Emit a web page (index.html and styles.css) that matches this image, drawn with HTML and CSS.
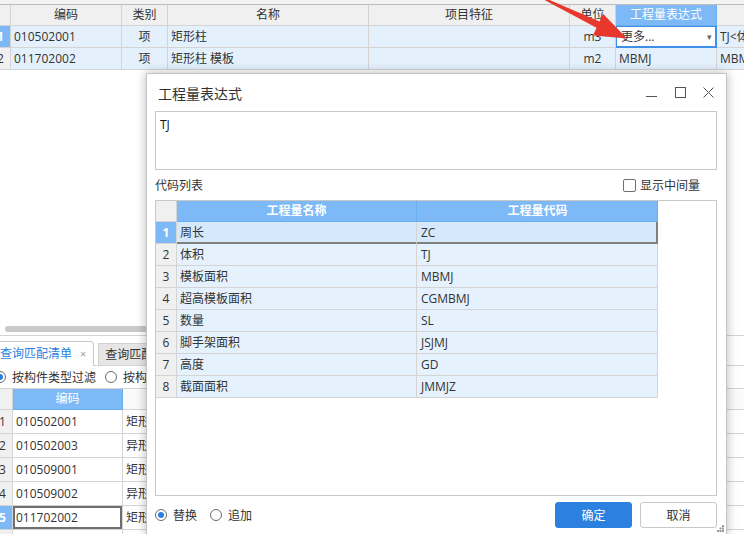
FILE: index.html
```html
<!DOCTYPE html>
<html lang="zh-CN">
<head>
<meta charset="utf-8">
<title>工程量表达式</title>
<link rel="stylesheet" href="styles.css">
</head>
<body>
<div class="app">
  <div class="topstrip"></div>
  <div class="tgrid">
    <div class="trow head">
      <div class="cell rn"></div>
      <div class="cell ctr">编码</div>
      <div class="cell ctr">类别</div>
      <div class="cell ctr">名称</div>
      <div class="cell ctr">项目特征</div>
      <div class="cell ctr">单位</div>
      <div class="cell ctr hl">工程量表达式</div>
      <div class="cell"></div>
    </div>
    <div class="trow">
      <div class="cell rn sel">1</div>
      <div class="cell">010502001</div>
      <div class="cell ctr">项</div>
      <div class="cell">矩形柱</div>
      <div class="cell"></div>
      <div class="cell ctr">m3</div>
      <div class="cell editor"><span>更多...</span><span class="caret">▾</span></div>
      <div class="cell">TJ&lt;体积&gt;</div>
    </div>
    <div class="trow">
      <div class="cell rn">2</div>
      <div class="cell">011702002</div>
      <div class="cell ctr">项</div>
      <div class="cell">矩形柱 模板</div>
      <div class="cell"></div>
      <div class="cell ctr">m2</div>
      <div class="cell">MBMJ</div>
      <div class="cell">MBMJ</div>
    </div>
  </div>

  <div class="blank"></div>
  <div class="hscroll"><div class="thumb"></div></div>

  <div class="tabbar">
    <div class="tab active"><span>查询匹配清单</span><span class="x">×</span></div>
    <div class="tab">查询匹配定额</div>
  </div>

  <div class="filter">
    <span class="radio on"></span><span class="flabel">按构件类型过滤</span>
    <span class="radio"></span><span class="flabel">按构件属性过滤</span>
  </div>

  <div class="lgrid">
    <div class="lrow head">
      <div class="cell rn"></div>
      <div class="cell ctr hl">编码</div>
      <div class="cell ctr">名称</div>
      <div class="cell ctr">项目特征</div>
      <div class="cell ctr">单位</div>
    </div>
    <div class="lrow"><div class="cell rn">1</div><div class="cell">010502001</div><div class="cell">矩形柱</div><div class="cell"></div><div class="cell"></div></div>
    <div class="lrow"><div class="cell rn">2</div><div class="cell">010502003</div><div class="cell">异形柱</div><div class="cell"></div><div class="cell"></div></div>
    <div class="lrow"><div class="cell rn">3</div><div class="cell">010509001</div><div class="cell">矩形柱</div><div class="cell"></div><div class="cell"></div></div>
    <div class="lrow"><div class="cell rn">4</div><div class="cell">010509002</div><div class="cell">异形柱</div><div class="cell"></div><div class="cell"></div></div>
    <div class="lrow"><div class="cell rn sel">5</div><div class="cell focus">011702002</div><div class="cell">矩形柱</div><div class="cell"></div><div class="cell"></div></div>
    <div class="lrow"><div class="cell rn">6</div><div class="cell">011702003</div><div class="cell">异形柱</div><div class="cell"></div><div class="cell"></div></div>
  </div>
</div>

<svg class="arrow" width="744" height="60" viewBox="0 0 744 60" aria-hidden="true">
  <polygon points="539.7,-2.6 596.5,27.8 593.0,35.5 627,38.5 603.0,13.7 599.5,21.4 540.3,-4.0" fill="#e8382d"/>
</svg>

<div class="dialog">
  <div class="titlebar">
    <span class="title">工程量表达式</span>
    <span class="wctl">
      <svg class="ic min" width="11" height="11" viewBox="0 0 11 11"><line x1="0" y1="9.5" x2="11" y2="9.5" stroke="#555" stroke-width="1"/></svg>
      <svg class="ic max" width="11" height="11" viewBox="0 0 11 11"><rect x="0.5" y="0.5" width="10" height="10" fill="none" stroke="#555" stroke-width="1"/></svg>
      <svg class="ic cls" width="11" height="11" viewBox="0 0 11 11"><path d="M0.5 0.5 L10.5 10.5 M10.5 0.5 L0.5 10.5" stroke="#555" stroke-width="1"/></svg>
    </span>
  </div>
  <div class="expr">TJ</div>
  <div class="labelrow">
    <span>代码列表</span>
    <span class="chk"><span class="box"></span><span>显示中间量</span></span>
  </div>
  <div class="frame">
    <div class="drow head">
      <div class="cell rn"></div>
      <div class="cell ctr hl">工程量名称</div>
      <div class="cell ctr hl">工程量代码</div>
    </div>
    <div class="drow cur"><div class="cell rn sel">1</div><div class="cell">周长</div><div class="cell">ZC</div></div>
    <div class="drow"><div class="cell rn">2</div><div class="cell">体积</div><div class="cell">TJ</div></div>
    <div class="drow"><div class="cell rn">3</div><div class="cell">模板面积</div><div class="cell">MBMJ</div></div>
    <div class="drow"><div class="cell rn">4</div><div class="cell">超高模板面积</div><div class="cell">CGMBMJ</div></div>
    <div class="drow"><div class="cell rn">5</div><div class="cell">数量</div><div class="cell">SL</div></div>
    <div class="drow"><div class="cell rn">6</div><div class="cell">脚手架面积</div><div class="cell">JSJMJ</div></div>
    <div class="drow"><div class="cell rn">7</div><div class="cell">高度</div><div class="cell">GD</div></div>
    <div class="drow"><div class="cell rn">8</div><div class="cell">截面面积</div><div class="cell">JMMJZ</div></div>
  </div>
  <div class="footer">
    <span class="radio on"></span><span class="rlabel">替换</span>
    <span class="radio"></span><span class="rlabel">追加</span>
    <span class="btns">
      <button class="btn primary">确定</button>
      <button class="btn">取消</button>
    </span>
  </div>
  <svg class="grip" width="7" height="7" viewBox="0 0 7 7" aria-hidden="true">
    <rect x="5" y="0" width="2" height="2" fill="#9a9a9a"/>
    <rect x="2.5" y="2.5" width="2" height="2" fill="#9a9a9a"/>
    <rect x="5" y="2.5" width="2" height="2" fill="#9a9a9a"/>
    <rect x="0" y="5" width="2" height="2" fill="#9a9a9a"/>
    <rect x="2.5" y="5" width="2" height="2" fill="#9a9a9a"/>
    <rect x="5" y="5" width="2" height="2" fill="#9a9a9a"/>
  </svg>
</div>
</body>
</html>
```

FILE: styles.css
```css
* { box-sizing: border-box; margin: 0; padding: 0; }
html, body { width: 744px; height: 534px; overflow: hidden; background: #fff; }
body {
  position: relative;
  font-family: "Open Sans", "Noto Sans CJK SC", sans-serif;
  font-size: 12px;
  color: #333;
}

.app { display: flex; flex-direction: column; width: 744px; height: 534px; overflow: hidden; }

.topstrip { flex: none; height: 5px; background: #f3f3f3; border-bottom: 1px solid #bcbcbc; }

.cell {
  border-right: 1px solid #d4d4d4;
  border-bottom: 1px solid #d4d4d4;
  padding: 0 3px;
  white-space: nowrap;
  overflow: hidden;
}
.ctr { text-align: center; }
.rn { background: #f0f0f0; text-align: center; padding: 0; }
.rn.sel { background: #7db9f6; color: #fff; font-weight: bold; }
.hl { background: #7db9f6; color: #fff; border-right-color: #6aaef2; border-bottom-color: #6aaef2; }

/* top grid */
.tgrid { flex: none; margin-left: -9px; width: 820px; }
.trow {
  display: grid;
  grid-template-columns: 20px 111px 46px 201px 201px 46px 101px 94px;
  height: 22px;
  background: #e4f1fc;
}
.trow .cell { line-height: 21px; }
.trow.head { height: 21px; background: #f0f0f0; }
.trow.head .cell { line-height: 20px; }
.trow .editor {
  background: #fff;
  box-shadow: inset 0 0 0 1px #3f8fe8;
  border-color: #3f8fe8;
  display: flex;
  justify-content: space-between;
  padding: 0 4px 0 5px;
}
.caret { color: #666; font-size: 9px; }

.blank { flex: none; height: 253px; }
.hscroll { flex: none; height: 12px; padding: 3px 0 3px 5px; }
.thumb { width: 720px; height: 6px; background: #c9c9c9; border-radius: 3px; }

/* tabs */
.tabbar {
  flex: none;
  height: 31px;
  border-top: 1px solid #d4d4d4;
  border-bottom: 1px solid #d4d4d4;
  display: flex;
  align-items: flex-end;
  gap: 4px;
}
.tab {
  height: 22px;
  line-height: 21px;
  padding: 0 6px;
  background: #e6e6e6;
  border: 1px solid #d0d0d0;
  border-bottom: none;
  border-radius: 0 3px 0 0;
  white-space: nowrap;
}
.tab.active {
  height: 25px;
  line-height: 23px;
  margin-left: -2px;
  margin-bottom: -1px;
  padding: 0 7px 0 1px;
  background: #fff;
  color: #2b7fde;
  border-color: #c8c8c8;
  border-radius: 0 4px 0 0;
  display: flex;
  gap: 8px;
}
.tab.active .x { color: #9a9a9a; font-size: 11px; }

/* filter row */
.filter {
  flex: none;
  height: 23px;
  border-bottom: 1px solid #d4d4d4;
  display: flex;
  align-items: center;
  margin-left: -6px;
}
.flabel { margin-left: 6px; margin-right: 9px; white-space: nowrap; }

.radio {
  flex: none;
  width: 12px;
  height: 12px;
  border: 1px solid #6a6a6a;
  border-radius: 50%;
  background: #fff;
  display: inline-flex;
  align-items: center;
  justify-content: center;
}
.radio.on::after {
  content: "";
  width: 6px;
  height: 6px;
  border-radius: 50%;
  background: #2b7fde;
}

/* lower grid */
.lgrid { flex: none; margin-left: -7px; width: 760px; }
.lrow {
  display: grid;
  grid-template-columns: 20px 110px 200px 230px 200px;
  height: 24px;
  background: #fff;
}
.lrow .cell { line-height: 23px; }
.lrow.head { height: 21px; background: #fafafa; }
.lrow.head .cell { line-height: 20px; }
.lrow .focus { box-shadow: inset 0 0 0 2px #6f6f6f; }

/* arrow */
.arrow { position: absolute; left: 0; top: 0; pointer-events: none; }

/* dialog */
.dialog {
  position: absolute;
  left: 146px;
  top: 73px;
  width: 581px;
  height: 463px;
  background: #fff;
  border: 1px solid #c4c4c4;
  box-shadow: 0 0 10px rgba(0, 0, 0, 0.28);
  padding: 0 9px 0 8px;
  display: flex;
  flex-direction: column;
}
.titlebar {
  flex: none;
  height: 37px;
  display: flex;
  align-items: center;
  justify-content: space-between;
  padding-left: 3px;
}
.title { font-size: 14px; color: #333; }
.wctl { display: flex; align-items: center; }
.ic { display: block; }
.ic.min { margin-right: 18px; }
.ic.max { margin-right: 17px; }
.ic.cls { margin-right: 3px; }

.expr {
  flex: none;
  height: 59px;
  border: 1px solid #c8c8c8;
  padding: 5px 4px;
  line-height: 16px;
  color: #111;
}
.labelrow {
  flex: none;
  height: 30px;
  display: flex;
  align-items: center;
  justify-content: space-between;
}
.chk { display: flex; align-items: center; gap: 4px; margin-right: 17px; }
.box { width: 13px; height: 13px; border: 1px solid #707070; border-radius: 2px; background: #fff; }

.frame {
  flex: none;
  height: 296px;
  border: 1px solid #c8c8c8;
  background: #fff;
}
.drow {
  display: grid;
  grid-template-columns: 21px 240px 241px;
  width: 502px;
  height: 22px;
  background: #e5f2fe;
}
.drow .cell { line-height: 21px; }
.drow.head { height: 21px; }
.drow.head .cell { line-height: 20px; }
.drow.head .hl { font-weight: bold; }
.drow .cell:nth-child(2) { padding-left: 3px; }
.drow .cell:nth-child(3) { padding-left: 4px; }
.drow.cur { background: #d5e9fd; }
.drow.cur .cell:nth-child(2) { border-bottom-color: #808080; box-shadow: inset 0 -1px 0 #808080; }
.drow.cur .cell:nth-child(3) { border-bottom-color: #808080; border-right-color: #808080; box-shadow: inset 0 -1px 0 #808080, inset -1px 0 0 #808080; }

.footer {
  flex: none;
  height: 38px;
  display: flex;
  align-items: center;
}
.rlabel { margin-left: 6px; margin-right: 13px; }
.btns { margin-left: auto; display: flex; gap: 8px; }
.btn {
  width: 77px;
  height: 26px;
  border: 1px solid #c8c8c8;
  border-radius: 3px;
  background: #fff;
  color: #333;
  font-family: inherit;
  font-size: 12px;
}
.btn.primary { background: #2b80e0; border-color: #2b80e0; color: #fff; }
.grip { position: absolute; right: 2px; bottom: 3px; }
```
